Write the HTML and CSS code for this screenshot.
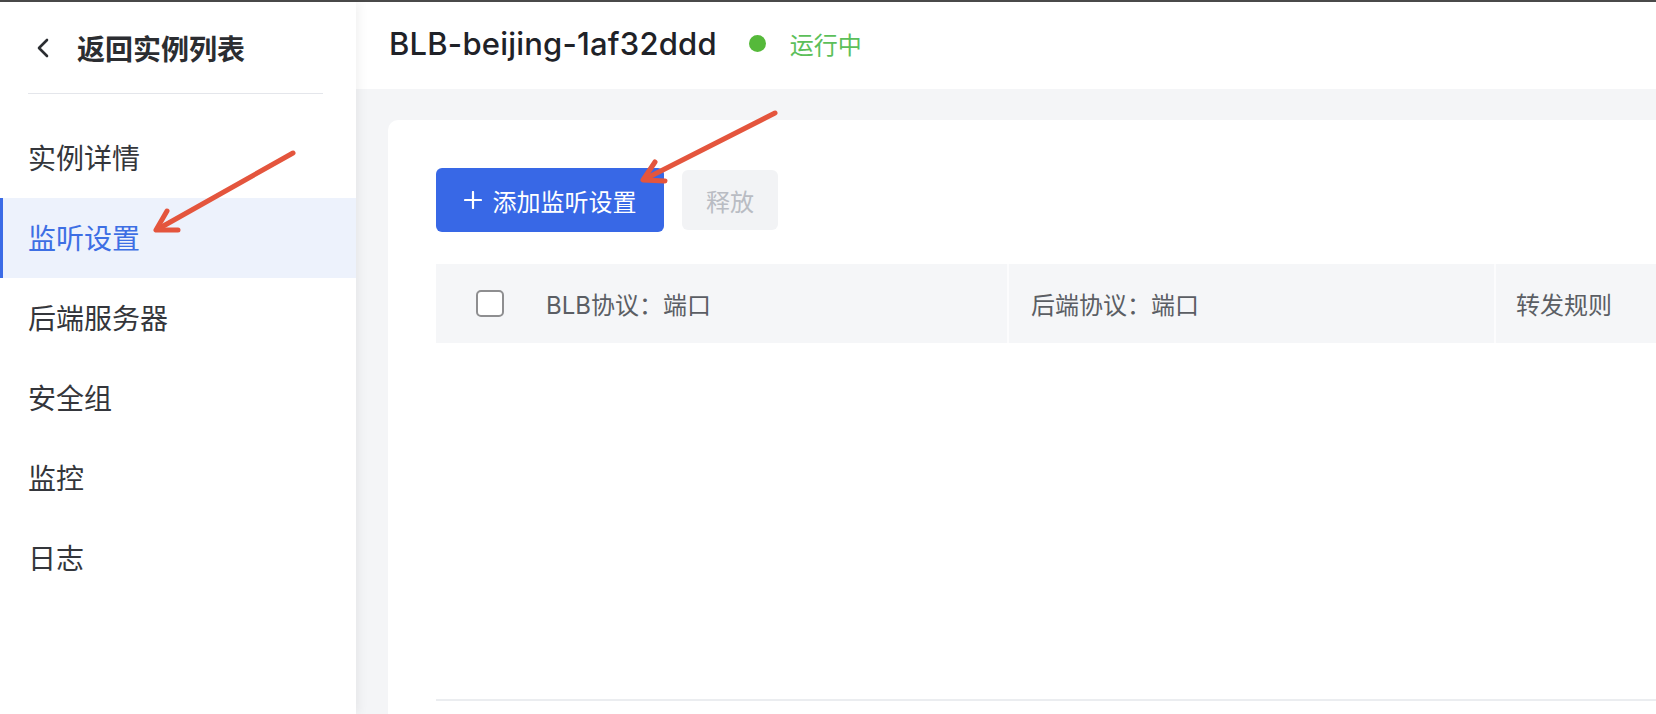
FILE: index.html
```html
<!DOCTYPE html>
<html lang="zh-CN">
<head>
    <meta charset="UTF-8">
    <meta name="viewport" content="width=device-width, initial-scale=1.0">
    <title>BLB-beijing-1af32ddd - 监听设置</title>
    <link rel="stylesheet" href="styles.css">
</head>
<body>
    <div class="topbar"></div>
    <div class="app">
        <aside class="sidebar">
            <div class="back">
                <svg class="back-icon" width="14" height="20" viewBox="0 0 14 20">
                    <polyline points="11,2 3,10 11,18" fill="none" stroke="#2b2d31" stroke-width="2.6" stroke-linecap="round" stroke-linejoin="round"/>
                </svg>
                <span>返回实例列表</span>
            </div>
            <div class="divider"></div>
            <ul class="menu">
                <li>实例详情</li>
                <li class="active">监听设置</li>
                <li>后端服务器</li>
                <li>安全组</li>
                <li>监控</li>
                <li>日志</li>
            </ul>
        </aside>

        <main class="main">
            <header class="page-head">
                <h1>BLB-beijing-1af32ddd</h1>
                <span class="status"><i class="dot"></i>运行中</span>
            </header>

            <section class="content">
                <div class="card">
                    <div class="toolbar">
                        <button class="btn btn-primary">
                            <svg width="18" height="18" viewBox="0 0 18 18">
                                <path d="M9 1v16M1 9h16" stroke="#fff" stroke-width="2.2" stroke-linecap="round"/>
                            </svg>
                            添加监听设置
                        </button>
                        <button class="btn btn-disabled" disabled>释放</button>
                    </div>

                    <div class="table">
                        <div class="thead">
                            <div class="th th-first"><span class="checkbox"></span>BLB协议：端口</div>
                            <div class="th th-second">后端协议：端口</div>
                            <div class="th th-third">转发规则</div>
                        </div>
                        <div class="tbody"></div>
                    </div>
                </div>
            </section>
        </main>
    </div>

    <!-- annotation arrows drawn over the screenshot -->
    <svg class="annotations" width="1656" height="714" viewBox="0 0 1656 714">
        <g fill="none" stroke="#e4553d" stroke-width="5" stroke-linecap="round" stroke-linejoin="round">
            <line x1="293" y1="153" x2="158" y2="229"/>
            <polyline points="167,211 156,230 178,230"/>
            <line x1="775" y1="113" x2="645" y2="179"/>
            <polyline points="655,162 643,180 665,181"/>
        </g>
    </svg>
</body>
</html>
```

FILE: styles.css
```css
* {
    box-sizing: border-box;
}
body {
    margin: 0;
    width: 1656px;
    height: 714px;
    overflow: hidden;
    font-family: "Inter", "Noto Sans CJK SC", sans-serif;
    color: #303133;
    background: #fff;
}
.topbar {
    height: 2px;
    background: #4a4a4a;
}
.app {
    display: flex;
    height: 712px;
}

/* sidebar */
.sidebar {
    width: 356px;
    flex-shrink: 0;
    background: #fff;
    box-shadow: 3px 0 10px rgba(0,0,0,0.06);
    position: relative;
    z-index: 1;
}
.back {
    height: 91px;
    display: flex;
    align-items: center;
    padding-left: 36px;
    font-size: 28px;
    font-weight: 600;
    color: #2b2d31;
}
.back-icon {
    margin-right: 27px;
}
.divider {
    margin: 0 33px 0 28px;
    border-top: 1px solid #e4e6eb;
}
.menu {
    list-style: none;
    margin: 0;
    padding: 24px 0 0;
}
.menu li {
    height: 80px;
    line-height: 82px;
    padding-left: 28px;
    font-size: 28px;
    color: #34363b;
}
.menu li.active {
    background: #edf2fc;
    color: #3d6fe4;
    border-left: 3px solid #3b6be6;
    padding-left: 25px;
}

/* main area */
.main {
    flex: 1;
    display: flex;
    flex-direction: column;
    background: #f4f5f7;
}
.page-head {
    height: 87px;
    flex-shrink: 0;
    display: flex;
    align-items: center;
    padding: 0 0 4px 33px;
    background: #fff;
}
.page-head h1 {
    margin: 0;
    font-size: 31px;
    font-weight: 500;
    letter-spacing: 0.2px;
    color: #1f2228;
}
.status {
    display: flex;
    align-items: center;
    margin-left: 32px;
    font-size: 24px;
    color: #5cbf5a;
}
.dot {
    width: 17px;
    height: 17px;
    border-radius: 50%;
    background: #55b93a;
    margin-right: 24px;
}
.content {
    flex: 1;
    display: flex;
    padding: 31px 0 0 32px;
}
.card {
    flex: 1;
    background: #fff;
    border-radius: 10px 0 0 0;
    padding: 48px 0 0 48px;
}

/* toolbar */
.toolbar {
    display: flex;
    align-items: center;
    gap: 18px;
}
.btn {
    border: none;
    border-radius: 6px;
    font-family: inherit;
    font-size: 24px;
    display: flex;
    align-items: center;
    justify-content: center;
}
.btn-primary {
    width: 228px;
    height: 64px;
    gap: 11px;
    background: #3868e6;
    color: #fff;
}
.btn-disabled {
    width: 96px;
    height: 60px;
    background: #f2f3f5;
    color: #b9bcc3;
}

/* table */
.table {
    margin-top: 32px;
}
.thead {
    display: grid;
    grid-template-columns: 571px 487px 1fr;
    height: 79px;
    background: #f5f6f8;
}
.th {
    display: flex;
    align-items: center;
    font-size: 24px;
    color: #5b5e64;
}
.th-first {
    padding-left: 40px;
}
.th-second {
    border-left: 2px solid #fcfcfd;
    padding-left: 22px;
}
.th-third {
    border-left: 2px solid #fcfcfd;
    padding-left: 20px;
}
.checkbox {
    width: 28px;
    height: 27px;
    border: 2px solid #8e8e90;
    border-radius: 5px;
    background: #fff;
    margin-right: 42px;
}
.tbody {
    height: 358px;
    border-bottom: 2px solid #ebedf0;
}

/* annotation layer */
.annotations {
    position: absolute;
    top: 0;
    left: 0;
    z-index: 10;
    pointer-events: none;
}
```
